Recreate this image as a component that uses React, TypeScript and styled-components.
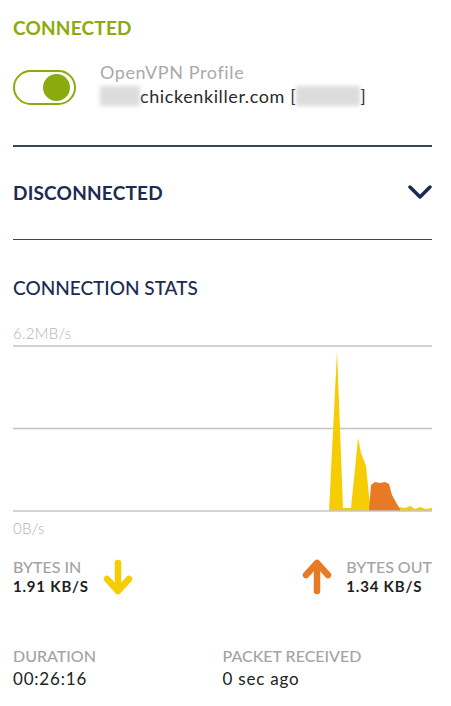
import React from "react";
import styled, { createGlobalStyle } from "styled-components";

const Global = createGlobalStyle`
  html, body { margin: 0; padding: 0; background: #ffffff; }
  body { font-family: "Lato", "Open Sans", sans-serif; }
`;

const Page = styled.div`
  width: 451px;
  box-sizing: border-box;
  padding: 16px 19px 0 13px;
  display: flex;
  flex-direction: column;
`;

const StatusTitle = styled.div<{ $color: string; $weight?: number }>`
  font-size: 19px;
  line-height: 24px;
  font-weight: ${(p) => p.$weight ?? 700};
  color: ${(p) => p.$color};
  letter-spacing: 0.2px;
`;

const ProfileRow = styled.div`
  display: flex;
  align-items: center;
  gap: 24px;
  margin-top: 26px;
  padding-bottom: 37px;
`;

const Toggle = styled.div`
  width: 63px;
  height: 35px;
  box-sizing: border-box;
  border: 2.5px solid #8aaa0e;
  border-radius: 18px;
  display: flex;
  align-items: center;
  justify-content: flex-end;
  padding-right: 4px;
`;

const Knob = styled.div`
  width: 27px;
  height: 27px;
  border-radius: 50%;
  background: #8aaa0e;
`;

const ProfileText = styled.div`
  display: flex;
  flex-direction: column;
  margin-top: -6px;
`;

const ProfileName = styled.div`
  font-size: 18px;
  line-height: 24px;
  color: #a9a9a9;
  letter-spacing: 0.6px;
`;

const ProfileHost = styled.div`
  font-size: 18px;
  line-height: 24px;
  color: #2a2a2a;
  display: flex;
  align-items: center;
  letter-spacing: 0.6px;
`;

const Blur = styled.span<{ $w: number }>`
  display: inline-block;
  width: ${(p) => p.$w}px;
  height: 20px;
  background: #dcdcdc;
  filter: blur(2px);
`;

const Divider = styled.div`
  height: 1.5px;
  background: #3b4363;
`;

const AccordionRow = styled.div`
  display: flex;
  align-items: center;
  justify-content: space-between;
  height: 92px;
`;

const SectionTitle = styled.div`
  margin-top: 36px;
  font-size: 19px;
  line-height: 24px;
  font-weight: 500;
  color: #1d2a52;
`;

const AxisLabel = styled.div<{ $top: number }>`
  margin-top: ${(p) => p.$top}px;
  font-size: 15px;
  line-height: 18px;
  font-weight: 300;
  color: #b3b3b3;
  letter-spacing: 0.3px;
`;

const ChartSvg = styled.svg`
  display: block;
  margin-top: 3px;
`;

const BytesRow = styled.div`
  display: flex;
  justify-content: space-between;
  align-items: center;
  margin-top: 20px;
`;

const BytesGroup = styled.div`
  display: flex;
  align-items: center;
  gap: 14px;
`;

const Stat = styled.div`
  display: flex;
  flex-direction: column;
`;

const Label = styled.div`
  font-size: 16px;
  line-height: 20px;
  font-weight: 500;
  color: #a3a3a3;
`;

const BoldValue = styled.div`
  font-size: 15px;
  line-height: 19px;
  font-weight: 700;
  color: #1e1e1e;
  letter-spacing: 0.8px;
`;

const InfoGrid = styled.div`
  display: grid;
  grid-template-columns: 1fr 1fr;
  margin-top: 50px;
`;

const Value = styled.div`
  font-size: 17px;
  line-height: 22px;
  color: #222;
  margin-top: 2px;
  letter-spacing: 0.8px;
`;

const Arrow = ({ color, up }: { color: string; up?: boolean }) => (
  <svg width="30" height="36" viewBox="0 0 30 36">
    <g
      fill="none"
      stroke={color}
      strokeWidth="6.5"
      strokeLinecap="round"
      strokeLinejoin="round"
      transform={up ? "rotate(180 15 18)" : undefined}
    >
      <path d="M15 4 L15 31" />
      <path d="M4 20 L15 32 L26 20" />
    </g>
  </svg>
);

const Chart = () => (
  <ChartSvg width="419" height="168" viewBox="0 0 419 168">
    <g transform="translate(-13,-344)">
      <line x1="13" x2="432" y1="345" y2="345" stroke="#c4c4c4" strokeWidth="1.5" />
      <line x1="13" x2="432" y1="427.5" y2="427.5" stroke="#c4c4c4" strokeWidth="1.5" />
      <path
        d="M329,510 L337,350 L343,507 L351,507 L358,437 L361,452 L366,465 L369,495 L371,506 L380,507 L385,505 L390,508 L398,506 L405,507 L410,505 L415,508 L420,506 L426,508 L432,507 L432,510 Z"
        fill="#f6cd05"
      />
      <path
        d="M369,510 L371,484 L375,481 L380,482 L385,481 L389,483 L392,494 L397,503 L400,508 L400,510 Z"
        fill="#e77a25"
      />
      <line x1="13" x2="432" y1="510" y2="510" stroke="#c4c4c4" strokeWidth="1.5" />
    </g>
  </ChartSvg>
);

export default function App() {
  return (
    <>
      <Global />
      <Page>
        <StatusTitle $color="#8aaa0e">CONNECTED</StatusTitle>
        <ProfileRow>
          <Toggle>
            <Knob />
          </Toggle>
          <ProfileText>
            <ProfileName>OpenVPN Profile</ProfileName>
            <ProfileHost>
              <Blur $w={40} />
              chickenkiller.com [<Blur $w={64} />]
            </ProfileHost>
          </ProfileText>
        </ProfileRow>
        <Divider />
        <AccordionRow>
          <StatusTitle $color="#1d2a52">DISCONNECTED</StatusTitle>
          <svg width="24" height="15" viewBox="0 0 24 15">
            <path
              d="M2 2 L12 12 L22 2"
              fill="none"
              stroke="#1d2a52"
              strokeWidth="3.5"
              strokeLinecap="round"
              strokeLinejoin="round"
            />
          </svg>
        </AccordionRow>
        <Divider />
        <SectionTitle>CONNECTION STATS</SectionTitle>
        <AxisLabel $top={24}>6.2MB/s</AxisLabel>
        <Chart />
        <AxisLabel $top={6}>0B/s</AxisLabel>
        <BytesRow>
          <BytesGroup>
            <Stat>
              <Label>BYTES IN</Label>
              <BoldValue>1.91 KB/S</BoldValue>
            </Stat>
            <Arrow color="#f6cd05" />
          </BytesGroup>
          <BytesGroup>
            <Arrow color="#e77a25" up />
            <Stat>
              <Label>BYTES OUT</Label>
              <BoldValue>1.34 KB/S</BoldValue>
            </Stat>
          </BytesGroup>
        </BytesRow>
        <InfoGrid>
          <Stat>
            <Label>DURATION</Label>
            <Value>00:26:16</Value>
          </Stat>
          <Stat>
            <Label>PACKET RECEIVED</Label>
            <Value>0 sec ago</Value>
          </Stat>
        </InfoGrid>
      </Page>
    </>
  );
}
